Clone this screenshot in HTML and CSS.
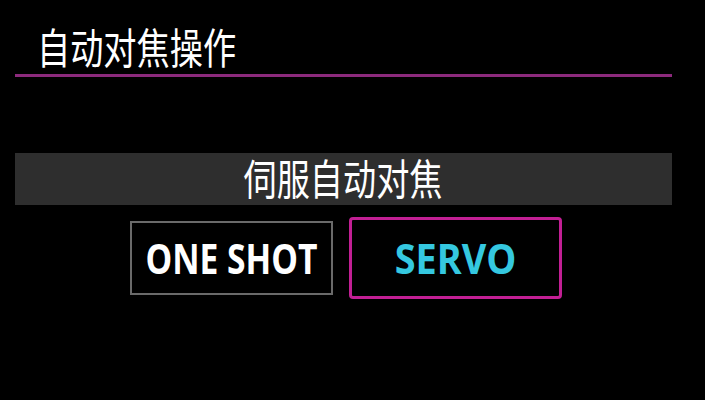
FILE: index.html
```html
<!DOCTYPE html>
<html lang="zh-CN">
<head>
<meta charset="utf-8">
<title>自动对焦操作</title>
<link rel="stylesheet" href="styles.css">
</head>
<body>
<div class="screen">
  <header class="header">
    <h1 class="title"><span class="narrow">自动对焦操作</span></h1>
  </header>
  <div class="rule"></div>
  <div class="current"><span class="narrow">伺服自动对焦</span></div>
  <div class="options">
    <div class="option"><span class="label">ONE SHOT</span></div>
    <div class="option selected"><span class="label">SERVO</span></div>
  </div>
</div>
</body>
</html>
```
FILE: styles.css
```css
html, body {
  margin: 0;
  padding: 0;
  background: #000;
}

.screen {
  width: 705px;
  height: 400px;
  background: #000;
  color: #fff;
  font-family: "Noto Sans CJK SC", "Noto Sans", sans-serif;
  overflow: hidden;
}

.header {
  height: 74px;
  padding-left: 37px;
  box-sizing: border-box;
  padding-top: 23px;
}

.title {
  margin: 0;
  font-size: 42px;
  font-weight: 400;
  line-height: 46px;
  height: 46px;
}

/* CJK labels on the camera screen use a tall, narrow face */
.narrow {
  display: inline-block;
  transform: scaleX(0.79);
  transform-origin: left center;
}

.rule {
  margin: 0 33px 0 15px;
  height: 3px;
  background: #8c2a7c;
}

.current {
  margin: 76px 33px 0 15px;
  height: 52px;
  padding-bottom: 4px;
  box-sizing: border-box;
  background: #2e2e2e;
  font-size: 42px;
  line-height: 48px;
  text-align: center;
}

.current .narrow {
  transform-origin: center center;
}

.options {
  display: flex;
  align-items: center;
  gap: 16px;
  padding-left: 130px;
  margin-top: 12px;
}

.option {
  box-sizing: border-box;
  width: 203px;
  height: 74px;
  border: 2px solid #6a6a6a;
  display: flex;
  align-items: center;
  justify-content: center;
  font-family: "Open Sans", "Liberation Sans", sans-serif;
  font-weight: 700;
  font-size: 42px;
  color: #fff;
}

.option.selected {
  width: 213px;
  height: 82px;
  border: 3px solid #c21f94;
  border-radius: 4px;
  color: #35c8e0;
}

.label {
  display: inline-block;
  transform: scaleX(0.8);
  white-space: nowrap;
  line-height: 1;
}

.selected .label {
  transform: scaleX(0.9);
}
```
